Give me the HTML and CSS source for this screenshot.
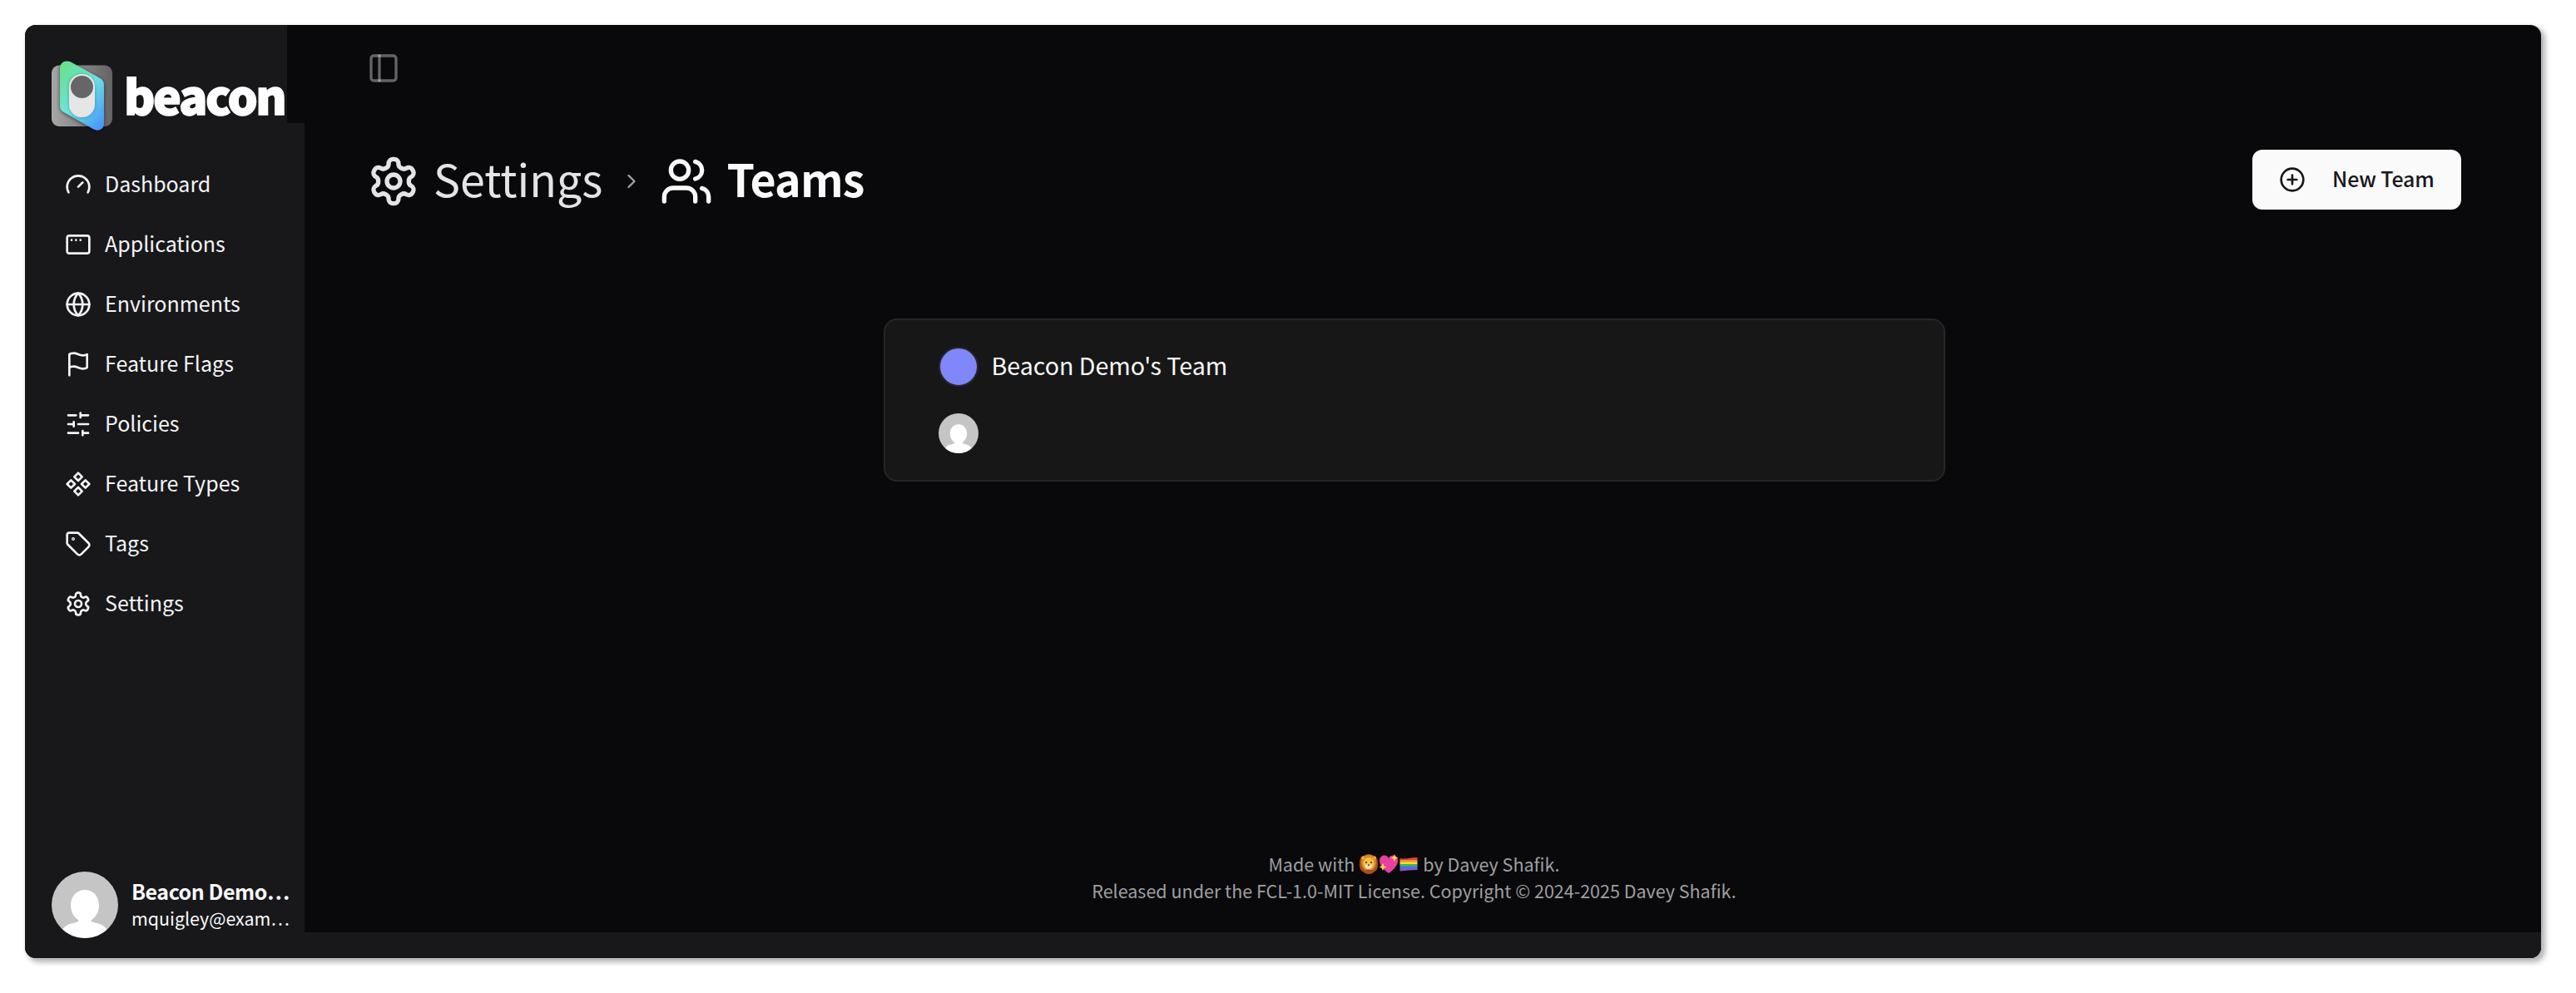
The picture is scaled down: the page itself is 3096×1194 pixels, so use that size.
FILE: index.html
```html
<!DOCTYPE html>
<html lang="en">
<head>
<meta charset="utf-8">
<title>Teams</title>
<link rel="stylesheet" href="styles.css">
</head>
<body>
<svg class="defs" width="0" height="0">
  <symbol id="gear" viewBox="0 0 24 24"><path d="M12.22 2h-.44a2 2 0 0 0-2 2v.18a2 2 0 0 1-1 1.73l-.43.25a2 2 0 0 1-2 0l-.15-.08a2 2 0 0 0-2.73.73l-.22.38a2 2 0 0 0 .73 2.73l.15.1a2 2 0 0 1 1 1.72v.51a2 2 0 0 1-1 1.74l-.15.09a2 2 0 0 0-.73 2.73l.22.38a2 2 0 0 0 2.73.73l.15-.08a2 2 0 0 1 2 0l.43.25a2 2 0 0 1 1 1.73V20a2 2 0 0 0 2 2h.44a2 2 0 0 0 2-2v-.18a2 2 0 0 1 1-1.73l.43-.25a2 2 0 0 1 2 0l.15.08a2 2 0 0 0 2.73-.73l.22-.39a2 2 0 0 0-.73-2.73l-.15-.08a2 2 0 0 1-1-1.74v-.5a2 2 0 0 1 1-1.74l.15-.09a2 2 0 0 0 .73-2.73l-.22-.38a2 2 0 0 0-2.73-.73l-.15.08a2 2 0 0 1-2 0l-.43-.25a2 2 0 0 1-1-1.73V4a2 2 0 0 0-2-2z"/><circle cx="12" cy="12" r="3"/></symbol>
  <symbol id="person" viewBox="0 0 80 80"><path fill="#c5c5c5" d="M0 0h80v80H0z"/><path fill="#fff" d="M40 22c10 0 17 8 17 18.500c0 8-4 14.500-9.500 18c0 2 2 2.500 5 3c8 1.500 13 5 16 12V80H11v-6.500c3-7 8-10.500 16.500-12c3-.5 5-1 5-3C27 55 23 48.500 23 40.500C23 30 30 22 40 22z"/></symbol>
</svg>
<div class="window">
  <aside class="sidebar">
    <div class="brand">
      <svg class="logo" viewBox="0 0 80 92">
        <defs>
          <linearGradient id="plate" x1="0" y1="0" x2="1" y2="0"><stop offset="0" stop-color="#a6a6a6"/><stop offset="1" stop-color="#636363"/></linearGradient>
          <linearGradient id="face" x1="0.1" y1="0" x2="0.9" y2="1"><stop offset="0" stop-color="#66e08a"/><stop offset="0.5" stop-color="#6ce5e0"/><stop offset="1" stop-color="#4795fb"/></linearGradient>
          <filter id="shade" x="-30%" y="-30%" width="160%" height="160%"><feDropShadow dx="0" dy="1" stdDeviation="2" flood-color="#000" flood-opacity="0.6"/></filter>
          <filter id="soft-shade" x="-30%" y="-30%" width="160%" height="160%"><feDropShadow dx="0" dy="0" stdDeviation="2" flood-color="#000" flood-opacity="0.3"/></filter>
        </defs>
        <rect x="4" y="8.500" width="73" height="73.500" rx="9" fill="url(#plate)"/>
        <path d="M14 12c0-7 7-10.500 13-7.500l35 19.500c3.500 2 5 4.500 5 8.500v46c0 7-7 10-13 6.500L19 65c-3.500-2-5-4.500-5-8.500z" fill="url(#face)" filter="url(#shade)"/>
        <rect x="25" y="19" width="31" height="52" rx="15.500" fill="#e6e6e6" filter="url(#soft-shade)"/>
        <circle cx="40.500" cy="34.500" r="13.500" fill="#666"/>
      </svg>
      <span class="wordmark">beacon</span>
    </div>
    <div class="side-body">
      <nav class="menu">
        <a class="item"><svg class="icon" viewBox="0 0 24 24"><path d="m12 14 4-4"/><path d="M3.340 19a10 10 0 1 1 17.320 0"/></svg><span class="label">Dashboard</span></a>
        <a class="item"><svg class="icon" viewBox="0 0 24 24"><rect x="2" y="4" width="20" height="16" rx="2"/><path d="M6 8h.01M10 8h.01M14 8h.01"/></svg><span class="label">Applications</span></a>
        <a class="item"><svg class="icon" viewBox="0 0 24 24"><circle cx="12" cy="12" r="10"/><path d="M12 2a14.500 14.500 0 0 0 0 20 14.500 14.500 0 0 0 0-20M2 12h20"/></svg><span class="label">Environments</span></a>
        <a class="item"><svg class="icon" viewBox="0 0 24 24"><path d="M4 15s1-1 4-1 5 2 8 2 4-1 4-1V3s-1 1-4 1-5-2-8-2-4 1-4 1zM4 22v-7"/></svg><span class="label">Feature Flags</span></a>
        <a class="item"><svg class="icon" viewBox="0 0 24 24"><path d="M21 4h-7M10 4H3M21 12h-9M8 12H3M21 20h-5M12 20H3M14 2v4M8 10v4M16 18v4"/></svg><span class="label">Policies</span></a>
        <a class="item"><svg class="icon" viewBox="0 0 24 24"><path d="M5.500 8.500 9 12l-3.500 3.500L2 12zM12 2l3.500 3.500L12 9 8.500 5.500zM18.500 8.500 22 12l-3.500 3.500L15 12zM12 15l3.500 3.500L12 22l-3.500-3.500z"/></svg><span class="label">Feature Types</span></a>
        <a class="item"><svg class="icon" viewBox="0 0 24 24"><path d="M12.586 2.586A2 2 0 0 0 11.172 2H4a2 2 0 0 0-2 2v7.172a2 2 0 0 0 .586 1.414l8.704 8.704a2.426 2.426 0 0 0 3.420 0l6.580-6.580a2.426 2.426 0 0 0 0-3.420z"/><circle cx="7.500" cy="7.500" r=".5"/></svg><span class="label">Tags</span></a>
        <a class="item"><svg class="icon"><use href="#gear"/></svg><span class="label">Settings</span></a>
      </nav>
      <div class="user">
        <svg class="avatar"><use href="#person"/></svg>
        <div class="who"><div class="name">Beacon Demo…</div><div class="mail">mquigley@exam…</div></div>
      </div>
    </div>
  </aside>
  <main class="main">
    <div class="content">
      <svg class="toggle" viewBox="0 0 24 24"><rect x="3" y="3" width="18" height="18" rx="2"/><path d="M9 3v18"/></svg>
      <header class="head">
        <h1 class="crumbs">
          <svg class="icon big soft"><use href="#gear"/></svg><span class="parent">Settings</span>
          <svg class="icon chevron" viewBox="0 0 24 24"><path d="m9 18 6-6-6-6"/></svg>
          <svg class="icon big" viewBox="0 0 24 24"><path d="M16 21v-2a4 4 0 0 0-4-4H6a4 4 0 0 0-4 4v2"/><circle cx="9" cy="7" r="4"/><path d="M22 21v-2a4 4 0 0 0-3-3.870M16 3.130a4 4 0 0 1 0 7.750"/></svg><span class="current">Teams</span>
        </h1>
        <button class="new"><svg class="icon" viewBox="0 0 24 24"><circle cx="12" cy="12" r="10"/><path d="M8 12h8M12 8v8"/></svg><span class="label">New Team</span></button>
      </header>
      <section class="card">
        <div class="team"><span class="dot"></span><span class="label">Beacon Demo's Team</span></div>
        <svg class="member"><use href="#person"/></svg>
      </section>
      <footer class="foot">
        <div class="line"><span>Made with</span>
          <svg class="emoji" viewBox="0 0 72 24">
            <path fill="#a8501c" d="M12 0c3 0 4 1 6 2c4 1 5 5 5 9s0 8-4 10c-2 2-4 3-7 3s-5-1-7-3c-4-2-4-6-4-10s1-8 5-9c2-1 3-2 6-2z"/><path fill="#d88a26" d="M12 1c5 0 9 3 9 9c0 4-2 7-4 9H7c-2-2-4-5-4-9c0-6 4-9 9-9z"/><circle cx="5" cy="4.500" r="2" fill="#f0a93a"/><circle cx="19" cy="4.500" r="2" fill="#f0a93a"/><ellipse cx="12" cy="11" rx="6.500" ry="7" fill="#fcc240"/><ellipse cx="12" cy="15" rx="4" ry="3" fill="#f8e3b8"/><circle cx="9" cy="10" r="1" fill="#3a2010"/><circle cx="15" cy="10" r="1" fill="#3a2010"/><path fill="#3a2010" d="M10.500 12.500h3L12 14.500z"/>
            <path fill="#e93fa0" d="M36 23C29 18 25 13 25 8c0-7 8-9 11-3c3-6 11-4 11 3c0 5-4 10-11 15z"/><path fill="#fbd84a" d="M43 0l1.300 3.200L47.500 4.500l-3.200 1.300L43 9l-1.300-3.200-3.200-1.300 3.200-1.300zM29 11l1.400 3.200 3.100 1.300-3.100 1.300L29 20l-1.400-3.200-3.100-1.300 3.100-1.300z"/>
            <g transform="translate(49.500 4)"><path fill="#e5413c" d="M0 1q5 1 10.500 0t10.500-1v3H0z"/><path fill="#f5912e" d="M0 3h21v3H0z"/><path fill="#f8d83c" d="M0 5.500h21v3H0z"/><path fill="#43b25a" d="M0 8h21v3H0z"/><path fill="#3b7be0" d="M0 10.500h21v3H0z"/><path fill="#9250c8" d="M0 13h21v2q-5 0-10.500 0.500t-10.500 1z"/></g>
          </svg>
          <span>by Davey Shafik.</span></div>
        <div class="line"><span>Released under the FCL-1.0-MIT License. Copyright © 2024-2025 Davey Shafik.</span></div>
      </footer>
    </div>
    <div class="strip"></div>
  </main>
</div>
</body>
</html>
```
FILE: styles.css
```css
* { box-sizing: border-box; }
body { margin: 0; background: #fff; color: #fafafa; font-family: "Noto Sans CJK SC", "Noto Sans", sans-serif; font-size: 25px; }
.defs { position: absolute; }
.window { display: flex; width: 3024px; height: 1122px; margin: 30px; border-radius: 13px; overflow: hidden; background: #09090b; box-shadow: 4px 4px 6px 1px rgba(0, 0, 0, .3); }
svg { display: block; flex: none; }
.icon { width: 32px; height: 32px; fill: none; stroke: currentColor; stroke-width: 2; stroke-linecap: round; stroke-linejoin: round; }
.label { padding-bottom: 4px; }
.sidebar { width: 336px; display: flex; flex-direction: column; }
.brand { position: relative; z-index: 1; width: 315px; height: 118px; padding: 40px 0 0 28px; display: flex; background: #18181b; }
.logo { width: 80px; height: 92px; }
.wordmark { margin-left: 11px; padding-top: 13px; font-size: 57px; font-weight: 900; line-height: 60px; letter-spacing: -2.400px; color: #fff; -webkit-text-stroke: 1.500px #fff; }
.side-body { flex: 1; background: #18181b; display: flex; flex-direction: column; justify-content: space-between; padding: 38px 0 24px; }
.menu { padding-left: 48px; }
.item { display: flex; align-items: center; gap: 16px; height: 72px; line-height: 36px; color: #f4f4f5; white-space: nowrap; }
.user { display: flex; padding-left: 32px; gap: 16px; }
.avatar { width: 80px; height: 80px; border-radius: 50%; }
.who { padding-top: 6px; white-space: nowrap; }
.name { font-weight: 700; line-height: 34px; letter-spacing: -.450px; }
.mail { font-size: 21.400px; line-height: 32px; }
.main { flex: 1; display: flex; flex-direction: column; }
.content { flex: 1; display: flex; flex-direction: column; padding: 32px 96px 34px 75px; }
.toggle { width: 40px; height: 40px; fill: none; stroke: rgba(250, 250, 250, .38); stroke-width: 2; stroke-linecap: round; stroke-linejoin: round; }
.head { display: flex; justify-content: space-between; align-items: center; margin-top: 74px; height: 80px; }
.crumbs { display: flex; align-items: center; margin: 4px 0 0; font-size: 53.700px; font-weight: 400; line-height: 72px; }
.big { width: 64px; height: 64px; }
.soft, .parent { color: #e4e4e7; }
.parent { margin-left: 16px; padding-bottom: 8px; }
.chevron { width: 28px; height: 28px; margin: 0 20px 0 21px; color: #a1a1aa; }
.current { margin-left: 16px; padding-bottom: 8px; font-weight: 700; letter-spacing: -.900px; }
.new { display: flex; align-items: center; width: 251px; height: 72px; padding: 0 0 0 32px; gap: 32px; border: 0; border-radius: 12px; background: #fafafa; color: #18181b; font: 500 25px/36px "Noto Sans CJK SC", sans-serif; letter-spacing: -.150px; white-space: nowrap; }
.card { align-self: center; width: 1276px; height: 196px; margin-top: 127px; padding: 32px 64px; border: 2px solid #262626; border-radius: 16px; background: #171717; }
.team { display: flex; align-items: center; gap: 16px; height: 48px; font-size: 28.600px; line-height: 44px; }
.dot { width: 48px; height: 48px; border: 2px solid #27272a; border-radius: 50%; background: #8087f8; }
.member { width: 48px; height: 48px; margin-top: 32px; border-radius: 50%; }
.foot { margin-top: auto; text-align: center; font-size: 21.500px; line-height: 32px; color: #9f9fa0; }
.line { display: flex; justify-content: center; height: 32px; white-space: nowrap; }
.emoji { width: 72px; height: 24px; margin: 4px 5px 0; }
.strip { height: 31px; background: #18181b; }
```
